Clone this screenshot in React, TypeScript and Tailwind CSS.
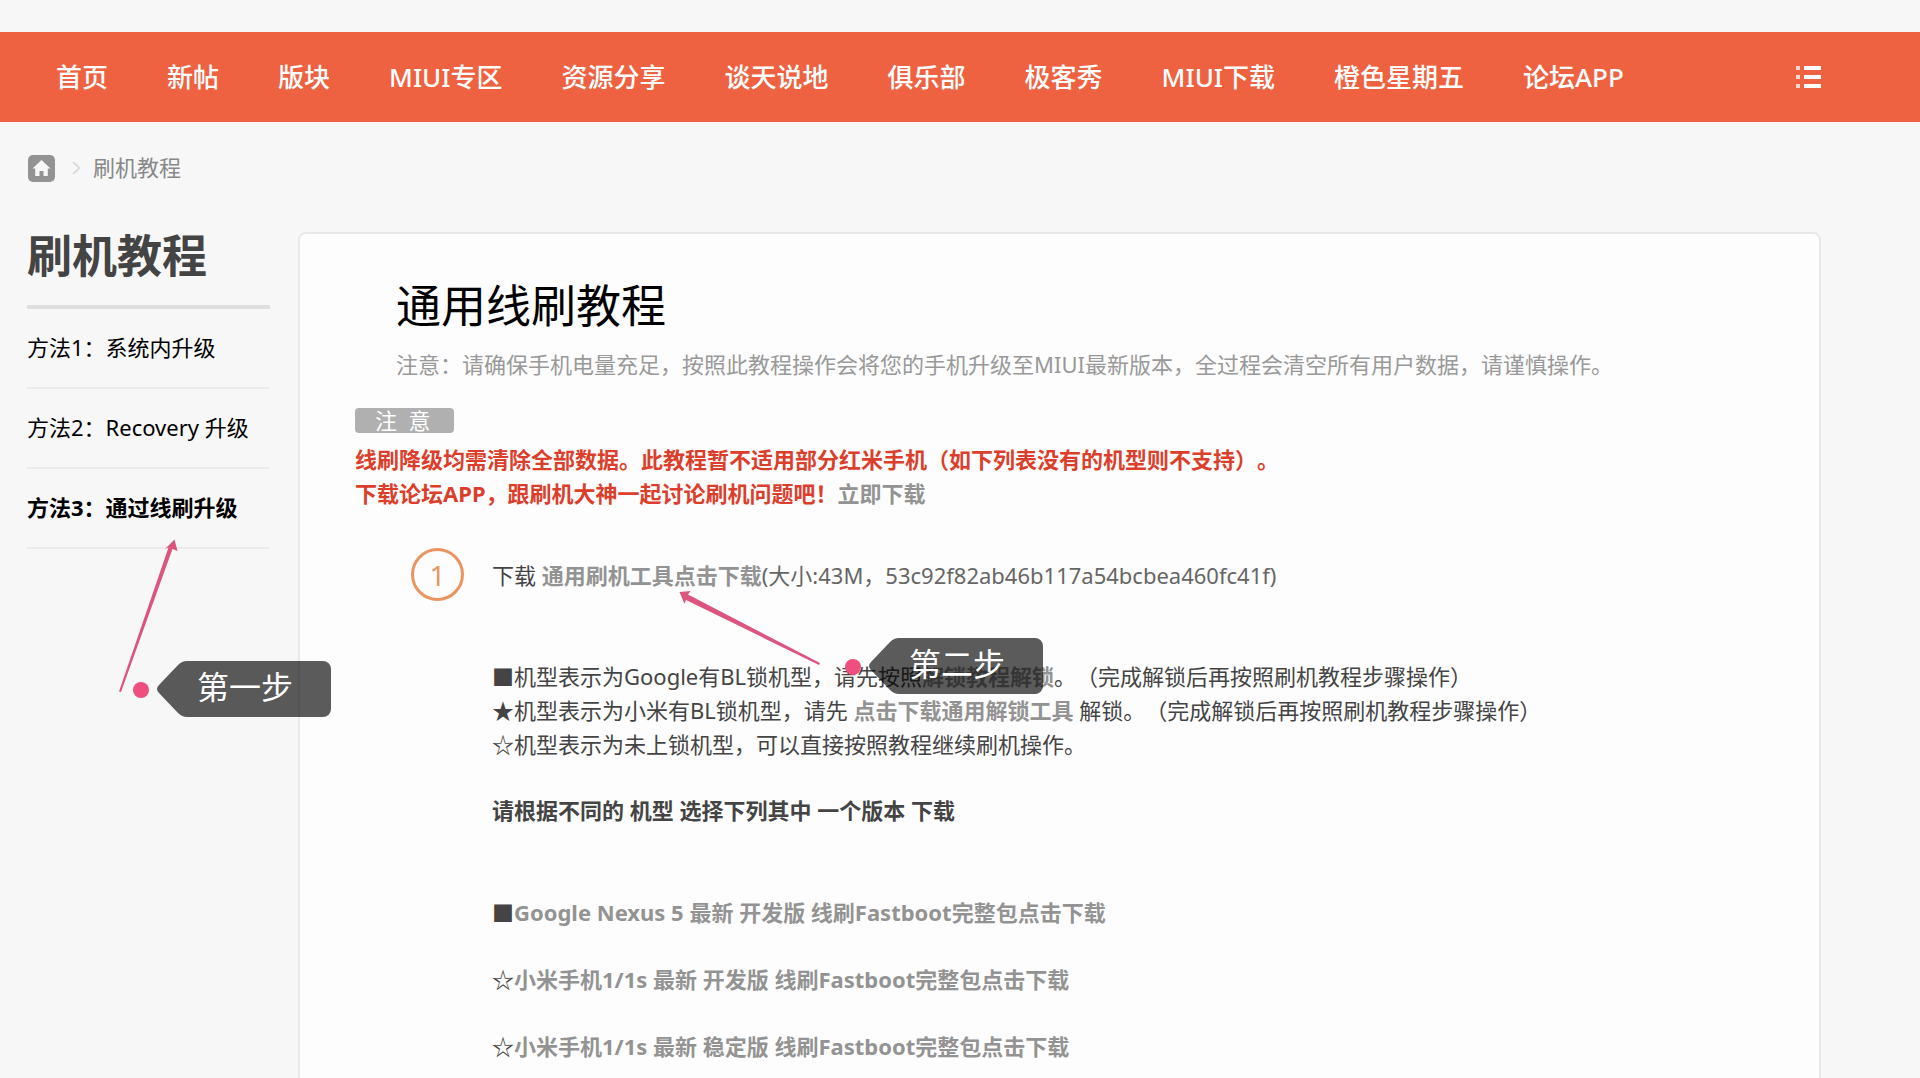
import React from "react";

const navItems = [
  "首页",
  "新帖",
  "版块",
  "MIUI专区",
  "资源分享",
  "谈天说地",
  "俱乐部",
  "极客秀",
  "MIUI下载",
  "橙色星期五",
  "论坛APP",
];

const methods = [
  { id: 1, title: "方法1：系统内升级" },
  { id: 2, title: "方法2：Recovery 升级" },
  { id: 3, title: "方法3：通过线刷升级" },
];

const packages = [
  { mark: "■", title: "Google Nexus 5 最新 开发版 线刷Fastboot完整包点击下载" },
  { mark: "☆", title: "小米手机1/1s 最新 开发版 线刷Fastboot完整包点击下载" },
  { mark: "☆", title: "小米手机1/1s 最新 稳定版 线刷Fastboot完整包点击下载" },
];

const MenuIcon = () => (
  <svg width="25" height="24" viewBox="0 0 25 24" fill="white">
    <path d="M0 1h4v4H0zM0 10h4v4H0zM0 19h4v4H0z" opacity="0.75" />
    <path d="M8 1h17v4H8zM8 10h17v4H8zM8 19h17v4H8z" />
  </svg>
);

const HomeIcon = () => (
  <svg width="27" height="27" viewBox="0 0 27 27">
    <rect width="27" height="27" rx="5" fill="#939393" />
    <path
      d="M13.5 5 22.5 13.5h-2.7V21h-4.3v-5h-4v5H7.2v-7.5H4.5z"
      fill="#f7f7f7"
    />
  </svg>
);

const ChevronIcon = () => (
  <svg width="9" height="14" viewBox="0 0 9 14" fill="none">
    <path d="M1 1l6.5 6L1 13" stroke="#dcdcdc" strokeWidth="2" />
  </svg>
);

const Callout = ({
  className,
  children,
}: {
  className: string;
  children: React.ReactNode;
}) => (
  <div className={`absolute w-[198px] h-14 ${className}`}>
    <svg
      className="absolute inset-0"
      width="198"
      height="56"
      viewBox="0 0 198 56"
    >
      <circle cx="8" cy="29" r="8" fill="#ee4f7f" />
      <path
        d="M54 0h136a8 8 0 0 1 8 8v40a8 8 0 0 1-8 8H54q-5 0-9-4L26 32q-4-4 0-8L45 4q4-4 9-4z"
        fill="#000"
        fillOpacity="0.64"
      />
    </svg>
    <span className="relative block pl-16 text-[32px] leading-[52px] text-white whitespace-nowrap">
      {children}
    </span>
  </div>
);

const Link = ({ children }: { children: React.ReactNode }) => (
  <a href="#" className="font-bold text-[#939393]">
    {children}
  </a>
);

const App = () => {
  const activeMethod = 3;

  return (
    <div
      lang="zh-CN"
      className="relative min-h-screen overflow-hidden bg-[#f7f7f7] pt-8 font-['Noto_Sans','Noto_Sans_CJK_SC',sans-serif] text-[22px] leading-[34px] text-[#444] [text-spacing-trim:space-all]"
    >
      <nav className="flex h-[90px] items-center justify-between bg-[#ee6241] pl-14 pr-[99px]">
        <ul className="flex gap-[59px] text-[26px] font-medium text-white whitespace-nowrap">
          {navItems.map((item) => (
            <li key={item}>
              <a href="#">{item}</a>
            </li>
          ))}
        </ul>
        <button type="button" aria-label="菜单">
          <MenuIcon />
        </button>
      </nav>

      <div className="flex h-[92px] items-center pl-7 text-[#888]">
        <a href="#" aria-label="首页">
          <HomeIcon />
        </a>
        <div className="ml-[17px] mr-3">
          <ChevronIcon />
        </div>
        <a href="#" className="pb-0.5">
          刷机教程
        </a>
      </div>

      <div className="flex gap-7 pl-[27px] pr-[99px]">
        <aside className="w-[243px] shrink-0 mt-2 text-black">
          <h2 className="border-b-4 border-[#dfdfdf] pt-1 pb-[19px] text-[45px] leading-[60px] font-bold text-[#444]">
            刷机教程
          </h2>
          <ul>
            {methods.map((method) => (
              <li
                key={method.id}
                className="flex h-20 items-center border-b-2 border-[#ebebeb] pb-0.5 whitespace-nowrap"
              >
                <a
                  href="#"
                  className={method.id === activeMethod ? "font-bold" : ""}
                >
                  {method.title}
                </a>
              </li>
            ))}
          </ul>
        </aside>

        <main className="mt-[18px] grow rounded-lg border-2 border-[#e9e9e9] bg-[#fdfdfd] pt-[41px] pl-[55px] pb-5">
          <div className="pl-[41px]">
            <h1 className="text-[45px] leading-[62px] text-black">
              通用线刷教程
            </h1>
            <p className="mt-2.5 text-[#999]">
              注意：请确保手机电量充足，按照此教程操作会将您的手机升级至MIUI最新版本，全过程会清空所有用户数据，请谨慎操作。
            </p>
          </div>

          <div className="mt-[27px] h-[25px] w-[99px] rounded bg-[#b0b0b0] pl-5 leading-6 text-white whitespace-pre">
            注  意
          </div>
          <p className="mt-[9px] font-bold text-[#dc3e2c]">
            线刷降级均需清除全部数据。此教程暂不适用部分红米手机（如下列表没有的机型则不支持）。
            <br />
            下载论坛APP，跟刷机大神一起讨论刷机问题吧！<Link>立即下载</Link>
          </p>

          <div className="mt-[38px] flex items-start gap-7 pl-14">
            <div className="flex size-[53px] shrink-0 items-center justify-center rounded-full border-3 border-[#e99561] text-[28px] text-[#e99561]">
              1
            </div>
            <div className="mt-2.5">
              <p>
                下载 <Link>通用刷机工具点击下载</Link>
                <span className="text-[#666]">
                  (大小:43M，53c92f82ab46b117a54bcbea460fc41f)
                </span>
              </p>
              <p className="mt-[67px]">
                ■机型表示为Google有BL锁机型，请先按照<Link>解锁教程解锁</Link>
                。（完成解锁后再按照刷机教程步骤操作）
                <br />
                ★机型表示为小米有BL锁机型，请先 <Link>点击下载通用解锁工具</Link>{" "}
                解锁。（完成解锁后再按照刷机教程步骤操作）
                <br />
                ☆机型表示为未上锁机型，可以直接按照教程继续刷机操作。
              </p>
              <p className="mt-8 font-bold">
                请根据不同的 机型 选择下列其中 一个版本 下载
              </p>
              <ul className="mt-[68px] flex flex-col gap-[33px]">
                {packages.map((item) => (
                  <li key={item.title}>
                    {item.mark}
                    <Link>{item.title}</Link>
                  </li>
                ))}
              </ul>
            </div>
          </div>
        </main>
      </div>

      {/* step annotations */}
      <svg
        className="pointer-events-none absolute left-0 top-0"
        width="900"
        height="720"
        viewBox="0 0 900 720"
        fill="#dc557f"
      >
        <path d="M119 691.5L168.500 547.500L165 549L174.500 539.500L177.500 551L172.500 549L121 692z" />
        <path d="M820 663L688 594.500L690.500 591L679.500 592L684.500 604L686 600L819 665z" />
      </svg>
      <Callout className="left-[133px] top-[661px]">第一步</Callout>
      <Callout className="left-[845px] top-[638px]">第二步</Callout>
    </div>
  );
};

export default App;
